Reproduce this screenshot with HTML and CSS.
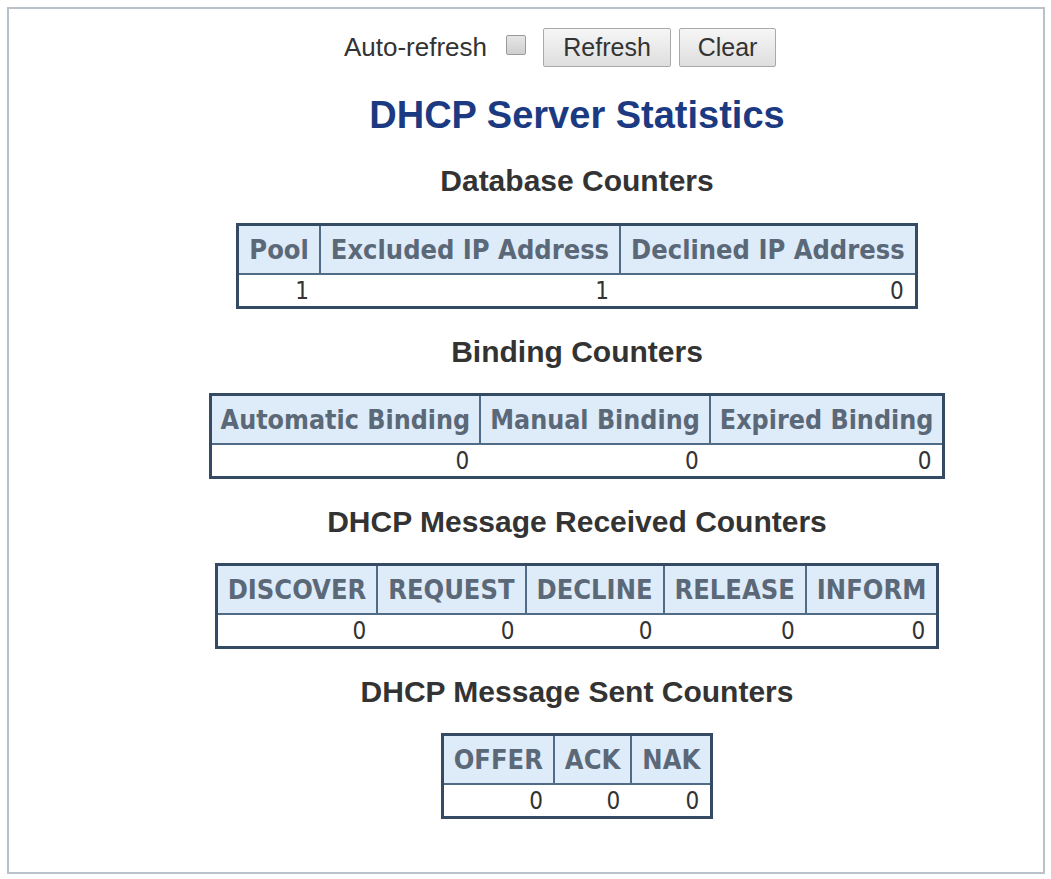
FILE: index.html
```html
<!DOCTYPE html>
<html>
<head>
<meta charset="utf-8">
<title>DHCP Server Statistics</title>
<link rel="stylesheet" href="styles.css">
</head>
<body>
<div class="frame">
  <div class="content">
    <div class="refresh-bar">
      <label class="auto-label">Auto-refresh <span class="checkbox"></span></label>
      <button class="btn btn-refresh">Refresh</button>
      <button class="btn btn-clear">Clear</button>
    </div>

    <h1 class="title">DHCP Server Statistics</h1>

    <h2 class="section first">Database Counters</h2>
    <table class="stats">
      <tr><th>Pool</th><th>Excluded IP Address</th><th>Declined IP Address</th></tr>
      <tr><td>1</td><td>1</td><td>0</td></tr>
    </table>

    <h2 class="section">Binding Counters</h2>
    <table class="stats compact">
      <tr><th>Automatic Binding</th><th>Manual Binding</th><th>Expired Binding</th></tr>
      <tr><td>0</td><td>0</td><td>0</td></tr>
    </table>

    <h2 class="section">DHCP Message Received Counters</h2>
    <table class="stats">
      <tr><th>DISCOVER</th><th>REQUEST</th><th>DECLINE</th><th>RELEASE</th><th>INFORM</th></tr>
      <tr><td>0</td><td>0</td><td>0</td><td>0</td><td>0</td></tr>
    </table>

    <h2 class="section">DHCP Message Sent Counters</h2>
    <table class="stats">
      <tr><th>OFFER</th><th>ACK</th><th>NAK</th></tr>
      <tr><td>0</td><td>0</td><td>0</td></tr>
    </table>
  </div>
</div>
</body>
</html>
```

FILE: styles.css
```css
html, body {
  margin: 0;
  padding: 0;
  background: #ffffff;
}

body {
  font-family: "Liberation Sans", Arial, sans-serif;
  color: #333333;
}

.frame {
  margin: 7px 6px 5px 7px;
  height: 867px;
  border: 2px solid #b9c2cb;
  box-sizing: border-box;
  padding-left: 102px;
}

.content {
  display: flex;
  flex-direction: column;
  align-items: center;
}

.refresh-bar {
  display: flex;
  align-items: center;
  padding-top: 19px;
  margin-right: 34px;
  gap: 8px;
}

.auto-label {
  display: flex;
  align-items: center;
  font-size: 26px;
  color: #333333;
  margin-right: 9px;
  gap: 19px;
}

.checkbox {
  display: inline-block;
  width: 18px;
  height: 18px;
  border: 1px solid #9a9a9a;
  border-radius: 2px;
  background: linear-gradient(#e6e6e6, #cfcfcf);
  margin-top: -6px;
}

.btn {
  font-family: "Liberation Sans", Arial, sans-serif;
  font-size: 25px;
  color: #333333;
  height: 39px;
  border: 1px solid #a9a9a9;
  border-radius: 2px;
  background: linear-gradient(#f6f6f6, #dedede);
  padding: 0 14px;
}

.btn-refresh { width: 128px; }
.btn-clear { width: 97px; }

.title {
  margin: 26px 0 0 0;
  font-size: 38px;
  line-height: 44px;
  font-weight: bold;
  color: #1b3a82;
}

.section {
  margin: 27px 0 25px 0;
  font-size: 30px;
  line-height: 32px;
  font-weight: bold;
  color: #333333;
}

.section.first {
  margin-top: 28px;
  margin-bottom: 26px;
}

.stats {
  border-collapse: collapse;
  border: 3px solid #344b63;
  font-family: "DejaVu Sans Condensed", "DejaVu Sans", sans-serif;
  font-stretch: condensed;
}

.stats th {
  background: #deebf8;
  color: #5a6878;
  font-size: 27px;
  font-weight: bold;
  height: 47px;
  padding: 0 10px;
  border-left: 2px solid #4f6b86;
  border-bottom: 2px solid #4f6b86;
  white-space: nowrap;
}

.stats.compact th {
  padding: 0 9px;
  font-size: 26.6px;
}

.stats th:first-child { border-left: none; }

.stats td {
  background: #ffffff;
  color: #333333;
  font-size: 24px;
  height: 31px;
  padding: 0 11px;
  text-align: right;
  line-height: 28px;
}
```
